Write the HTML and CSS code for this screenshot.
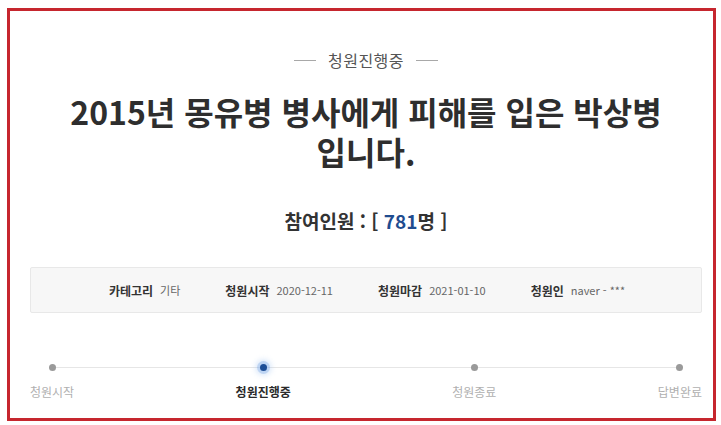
FILE: index.html
```html
<!DOCTYPE html>
<html lang="ko">
<head>
<meta charset="utf-8">
<link rel="stylesheet" href="styles.css">
</head>
<body>
<div class="frame">
  <div class="content">
    <div class="status"><span class="dash"></span><span class="status-text">청원진행중</span><span class="dash"></span></div>
    <h1 class="title"><span class="tline">2015년 몽유병 병사에게 피해를 입은 박상병</span><span class="tline">입니다.</span></h1>
    <div class="count">참여인원 : [ <span class="num">781</span>명 ]</div>
    <div class="info">
      <div class="item"><span class="label">카테고리</span><span class="value">기타</span></div>
      <div class="item"><span class="label">청원시작</span><span class="value">2020-12-11</span></div>
      <div class="item"><span class="label">청원마감</span><span class="value">2021-01-10</span></div>
      <div class="item"><span class="label">청원인</span><span class="value">naver - ***</span></div>
    </div>
    <div class="progress">
      <div class="track"></div>
      <div class="step"><span class="dot"></span><span class="step-label">청원시작</span></div>
      <div class="step active"><span class="dot"></span><span class="step-label">청원진행중</span></div>
      <div class="step"><span class="dot"></span><span class="step-label">청원종료</span></div>
      <div class="step"><span class="dot"></span><span class="step-label">답변완료</span></div>
    </div>
  </div>
</div>
</body>
</html>
```

FILE: styles.css
```css
html, body {
  margin: 0;
  padding: 0;
  background: #ffffff;
}
body {
  font-family: "Noto Sans CJK KR", "Noto Sans", sans-serif;
  color: #333;
}
.frame {
  margin: 8px 0 0 7px;
  width: 709px;
  height: 413px;
  box-sizing: border-box;
  border: 3px solid #c6262e;
  background: #fff;
}
.content {
  padding: 38px 11px 0 20px;
  display: flex;
  flex-direction: column;
  align-items: stretch;
}
.status {
  display: flex;
  justify-content: center;
  align-items: center;
  gap: 12px;
  height: 22px;
}
.dash {
  width: 22px;
  height: 1px;
  background: #a8a8a8;
}
.status-text {
  font-size: 16px;
  color: #555;
  line-height: 22px;
  letter-spacing: 0.5px;
}
.title {
  margin: 20px 0 0;
  font-size: 32px;
  font-weight: 700;
  color: #2e2e2e;
  text-align: center;
  display: flex;
  flex-direction: column;
  align-items: center;
}
.tline {
  display: block;
  height: 40px;
  line-height: 40px;
}
.count {
  margin-top: 37px;
  font-size: 19px;
  font-weight: 700;
  line-height: 26px;
  text-align: center;
  color: #333;
}
.num {
  color: #1f4c8f;
}
.info {
  margin-top: 33px;
  height: 46px;
  box-sizing: border-box;
  background: #f7f7f7;
  border: 1px solid #e8e8e8;
  border-radius: 2px;
  display: flex;
  justify-content: center;
  align-items: center;
  gap: 45px;
  padding-left: 2px;
}
.item {
  display: flex;
  align-items: center;
  gap: 7px;
  font-size: 11px;
}
.label {
  font-size: 12px;
  font-weight: 700;
  color: #333;
}
.value {
  color: #666;
}
.progress {
  position: relative;
  margin-top: 45px;
  display: flex;
  justify-content: space-between;
}
.track {
  position: absolute;
  left: 22px;
  right: 23px;
  top: 9px;
  height: 1px;
  background: #e6e6e6;
}
.step {
  position: relative;
  display: flex;
  flex-direction: column;
  align-items: center;
  gap: 13px;
}
.dot {
  width: 7px;
  height: 7px;
  border-radius: 50%;
  background: #9a9a9a;
  margin-top: 6px;
}
.step.active .dot {
  background: #1d4e96;
  box-shadow: 0 0 0 3px rgba(120, 165, 230, 0.35), 0 0 5px 5px rgba(150, 190, 240, 0.3);
}
.step-label {
  font-size: 12px;
  line-height: 16px;
  color: #b0b0b0;
}
.step.active .step-label {
  font-weight: 700;
  color: #2a2a2a;
}
```
